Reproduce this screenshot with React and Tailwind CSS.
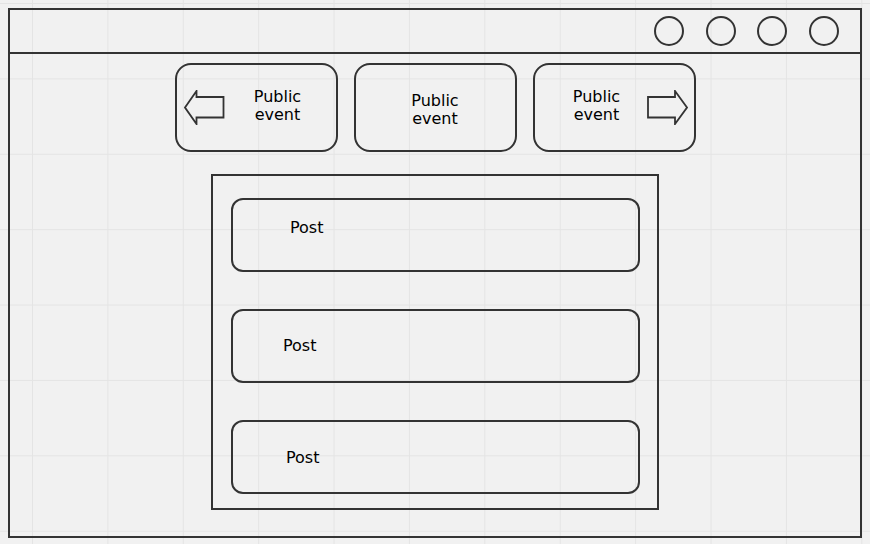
import React from 'react';

const LeftArrow = () => (
  <svg width="41" height="35" viewBox="0 0 41 35" className="shrink-0">
    <polygon points="1,17.5 12.5,1 12.5,7 39.5,7 39.5,27.5 12.5,27.5 12.5,34" fill="none" stroke="#333" strokeWidth="1.8" strokeLinejoin="miter" />
  </svg>
);

const RightArrow = ({ className = '' }) => (
  <svg width="41" height="35" viewBox="0 0 41 35" className={`shrink-0 ${className}`}>
    <polygon points="40,17.5 28,1 28,7 1,7 1,27.5 28,27.5 28,34" fill="none" stroke="#333" strokeWidth="1.8" strokeLinejoin="miter" />
  </svg>
);

const EventText = ({ className = '' }) => (
  <div className={`w-[60px] shrink-0 text-center text-[16px] leading-[18px] text-black ${className}`}>
    Public
    <br />
    event
  </div>
);

const posts = [
  { id: 1, pad: 'pl-[57px] pt-[19px]' },
  { id: 2, pad: 'pl-[50px] pt-[26px]' },
  { id: 3, pad: 'pl-[53px] pt-[27px]' },
];

export default function App() {
  return (
    <div
      className="w-[870px] h-[544px] overflow-hidden bg-[#f1f1f1] bg-[linear-gradient(to_right,#e4e4e4_1px,transparent_1px),linear-gradient(to_bottom,#e4e4e4_1px,transparent_1px)] bg-[size:75.4px_75.4px] bg-[position:32px_3px] pt-[8px] pl-[8px]"
      style={{ fontFamily: '"DejaVu Sans", Verdana, sans-serif' }}
    >
      {/* window frame */}
      <div className="w-[854px] h-[530px] border-2 border-[#333] flex flex-col">
        {/* header */}
        <div className="h-[44px] shrink-0 border-b-2 border-[#333] flex items-center justify-end gap-[21.7px] pr-[21px]">
          {[0, 1, 2, 3].map((i) => (
            <div key={i} className="w-[30px] h-[30px] rounded-full border-2 border-[#333]" />
          ))}
        </div>

        {/* body */}
        <div className="flex flex-col items-center pt-[9px]">
          {/* event cards */}
          <div className="flex gap-[16px]">
            <div className="w-[163px] h-[89px] rounded-[16px] border-2 border-[#333] flex items-center pl-[7px]">
              <LeftArrow />
              <EventText className="ml-[23px] mb-[3px]" />
            </div>
            <div className="w-[163px] h-[89px] rounded-[16px] border-2 border-[#333] flex items-center justify-center">
              <EventText className="mt-[4px]" />
            </div>
            <div className="w-[163px] h-[89px] rounded-[16px] border-2 border-[#333] flex items-center pl-[32px]">
              <EventText className="mb-[4px]" />
              <RightArrow className="ml-[20px]" />
            </div>
          </div>

          {/* feed */}
          <div className="mt-[22px] w-[448px] h-[336px] border-2 border-[#333] flex flex-col gap-[37px] pt-[22px] pl-[18px]">
            {posts.map((p) => (
              <div key={p.id} className={`w-[409px] h-[74px] rounded-[12px] border-2 border-[#333] text-[16px] leading-[18px] text-black ${p.pad}`}>
                Post
              </div>
            ))}
          </div>
        </div>
      </div>
    </div>
  );
}
